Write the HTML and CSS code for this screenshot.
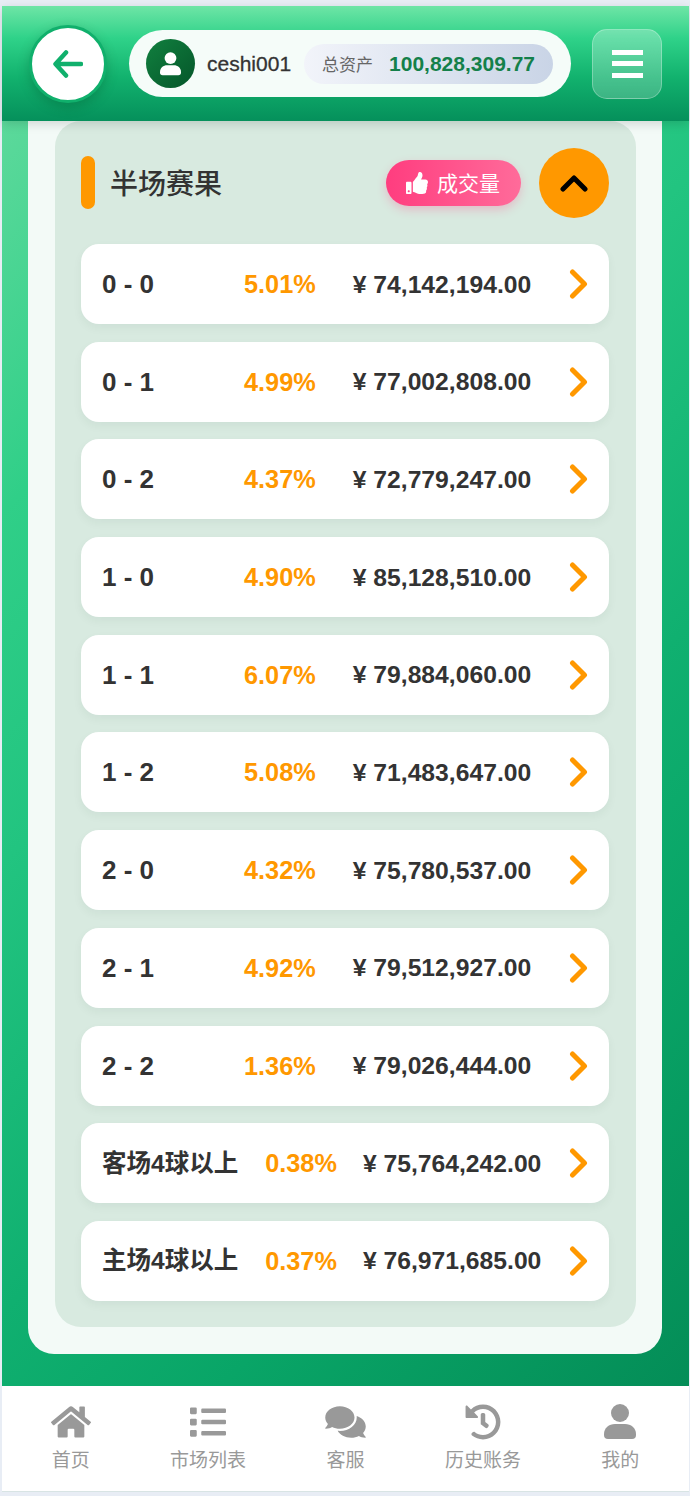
FILE: index.html
```html
<!DOCTYPE html>
<html lang="zh-CN">
<head>
	<meta charset="UTF-8">
	<meta name="viewport" content="width=device-width, initial-scale=1.0">
	<title>半场赛果</title>
	<link rel="stylesheet" href="styles.css">
</head>
<body>
	<div class="page">
		<header class="top_bar">
			<div class="back_btn">
				<svg width="30" height="28" viewBox="0 0 30 28"><path d="M13 2.500 2.500 14 13 25.500M3 14h25" fill="none" stroke="#10b06c" stroke-width="4.500" stroke-linecap="round" stroke-linejoin="round"/></svg>
			</div>
			<div class="user_pill">
				<div class="avatar">
					<svg width="21" height="24" viewBox="0 0 32 36"><circle cx="16" cy="9" r="9" fill="#fff"/><path fill="#fff" d="M0 30C0 24 5 20 11 20H21C27 20 32 24 32 30V31Q32 35 28 35H4Q0 35 0 31Z"/></svg>
				</div>
				<span class="user_name">ceshi001</span>
				<div class="balance">
					<span class="balance_label">总资产</span>
					<span class="balance_value">100,828,309.77</span>
				</div>
			</div>
			<div class="menu_btn">
				<i></i><i></i><i></i>
			</div>
		</header>

		<main class="content">
			<div class="card">
				<section class="panel">
					<div class="panel_head">
						<span class="accent"></span>
						<h2 class="panel_title">半场赛果</h2>
						<div class="volume_btn">
							<svg width="22" height="22" viewBox="0 0 512 512"><path fill="#fff" d="M104 224H24c-13.255 0-24 10.745-24 24v240c0 13.255 10.745 24 24 24h80c13.255 0 24-10.745 24-24V248c0-13.255-10.745-24-24-24zM64 472c-13.255 0-24-10.745-24-24s10.745-24 24-24 24 10.745 24 24-10.745 24-24 24zM384 81.452c0 42.416-25.97 66.208-33.277 94.548h101.723c33.397 0 59.397 27.746 59.553 58.098.084 17.938-7.546 37.249-19.439 49.197l-.11.11c9.836 23.337 8.237 56.037-9.308 79.469 8.681 25.895-.069 57.704-16.382 74.757 4.298 17.598 2.244 32.575-6.148 44.632C440.202 511.587 389.616 512 346.839 512l-2.845-.001c-48.287-.017-87.806-17.598-119.56-31.725-15.957-7.099-36.821-15.887-52.651-16.178-6.54-.12-11.783-5.457-11.783-11.998v-213.77c0-3.2 1.282-6.271 3.558-8.521 39.614-39.144 56.648-80.587 89.117-113.111 14.804-14.832 20.188-37.236 25.393-58.902C282.515 39.293 291.817 0 312 0c24 0 72 8 72 81.452z"/></svg>
							<span class="volume_text">成交量</span>
						</div>
						<div class="toggle_btn">
							<svg width="28" height="18" viewBox="0 0 28 18"><path d="M3 15 14 4l11 11" fill="none" stroke="#000" stroke-width="5" stroke-linecap="round" stroke-linejoin="round"/></svg>
						</div>
					</div>

					<div class="score_list">
						<div class="score_row">
							<span class="score">0 - 0</span><span class="rate">5.01%</span><span class="amount">¥ 74,142,194.00</span>
							<svg class="arrow" width="20" height="30" viewBox="0 0 20 30"><path d="M3.500 3 15.500 15 3.500 27" fill="none" stroke="#ff9800" stroke-width="5" stroke-linecap="round" stroke-linejoin="round"/></svg>
						</div>
						<div class="score_row">
							<span class="score">0 - 1</span><span class="rate">4.99%</span><span class="amount">¥ 77,002,808.00</span>
							<svg class="arrow" width="20" height="30" viewBox="0 0 20 30"><path d="M3.500 3 15.500 15 3.500 27" fill="none" stroke="#ff9800" stroke-width="5" stroke-linecap="round" stroke-linejoin="round"/></svg>
						</div>
						<div class="score_row">
							<span class="score">0 - 2</span><span class="rate">4.37%</span><span class="amount">¥ 72,779,247.00</span>
							<svg class="arrow" width="20" height="30" viewBox="0 0 20 30"><path d="M3.500 3 15.500 15 3.500 27" fill="none" stroke="#ff9800" stroke-width="5" stroke-linecap="round" stroke-linejoin="round"/></svg>
						</div>
						<div class="score_row">
							<span class="score">1 - 0</span><span class="rate">4.90%</span><span class="amount">¥ 85,128,510.00</span>
							<svg class="arrow" width="20" height="30" viewBox="0 0 20 30"><path d="M3.500 3 15.500 15 3.500 27" fill="none" stroke="#ff9800" stroke-width="5" stroke-linecap="round" stroke-linejoin="round"/></svg>
						</div>
						<div class="score_row">
							<span class="score">1 - 1</span><span class="rate">6.07%</span><span class="amount">¥ 79,884,060.00</span>
							<svg class="arrow" width="20" height="30" viewBox="0 0 20 30"><path d="M3.500 3 15.500 15 3.500 27" fill="none" stroke="#ff9800" stroke-width="5" stroke-linecap="round" stroke-linejoin="round"/></svg>
						</div>
						<div class="score_row">
							<span class="score">1 - 2</span><span class="rate">5.08%</span><span class="amount">¥ 71,483,647.00</span>
							<svg class="arrow" width="20" height="30" viewBox="0 0 20 30"><path d="M3.500 3 15.500 15 3.500 27" fill="none" stroke="#ff9800" stroke-width="5" stroke-linecap="round" stroke-linejoin="round"/></svg>
						</div>
						<div class="score_row">
							<span class="score">2 - 0</span><span class="rate">4.32%</span><span class="amount">¥ 75,780,537.00</span>
							<svg class="arrow" width="20" height="30" viewBox="0 0 20 30"><path d="M3.500 3 15.500 15 3.500 27" fill="none" stroke="#ff9800" stroke-width="5" stroke-linecap="round" stroke-linejoin="round"/></svg>
						</div>
						<div class="score_row">
							<span class="score">2 - 1</span><span class="rate">4.92%</span><span class="amount">¥ 79,512,927.00</span>
							<svg class="arrow" width="20" height="30" viewBox="0 0 20 30"><path d="M3.500 3 15.500 15 3.500 27" fill="none" stroke="#ff9800" stroke-width="5" stroke-linecap="round" stroke-linejoin="round"/></svg>
						</div>
						<div class="score_row">
							<span class="score">2 - 2</span><span class="rate">1.36%</span><span class="amount">¥ 79,026,444.00</span>
							<svg class="arrow" width="20" height="30" viewBox="0 0 20 30"><path d="M3.500 3 15.500 15 3.500 27" fill="none" stroke="#ff9800" stroke-width="5" stroke-linecap="round" stroke-linejoin="round"/></svg>
						</div>
						<div class="score_row long">
							<span class="score">客场4球以上</span><span class="rate">0.38%</span><span class="amount">¥ 75,764,242.00</span>
							<svg class="arrow" width="20" height="30" viewBox="0 0 20 30"><path d="M3.500 3 15.500 15 3.500 27" fill="none" stroke="#ff9800" stroke-width="5" stroke-linecap="round" stroke-linejoin="round"/></svg>
						</div>
						<div class="score_row long">
							<span class="score">主场4球以上</span><span class="rate">0.37%</span><span class="amount">¥ 76,971,685.00</span>
							<svg class="arrow" width="20" height="30" viewBox="0 0 20 30"><path d="M3.500 3 15.500 15 3.500 27" fill="none" stroke="#ff9800" stroke-width="5" stroke-linecap="round" stroke-linejoin="round"/></svg>
						</div>
					</div>
				</section>
			</div>
		</main>

		<nav class="tab_bar">
			<div class="tab">
				<svg width="40" height="36" viewBox="0 0 576 512"><path fill="#999" d="M280.37 148.26L96 300.11V464a16 16 0 0 0 16 16l112.06-.29a16 16 0 0 0 15.92-16V368a16 16 0 0 1 16-16h64a16 16 0 0 1 16 16v95.64a16 16 0 0 0 16 16.05L464 480a16 16 0 0 0 16-16V300L295.67 148.26a12.19 12.19 0 0 0-15.3 0zM571.6 251.47L488 182.56V44.05a12 12 0 0 0-12-12h-56a12 12 0 0 0-12 12v72.61L318.47 43a48 48 0 0 0-61 0L4.34 251.47a12 12 0 0 0-1.6 16.9l25.5 31A12 12 0 0 0 45.15 301l235.22-193.74a12.19 12.19 0 0 1 15.3 0L530.9 301a12 12 0 0 0 16.9-1.6l25.5-31a12 12 0 0 0-1.7-16.93z"/></svg>
				<span>首页</span>
			</div>
			<div class="tab">
				<svg width="36" height="36" viewBox="0 0 512 512"><path fill="#999" d="M80 368H16a16 16 0 0 0-16 16v64a16 16 0 0 0 16 16h64a16 16 0 0 0 16-16v-64a16 16 0 0 0-16-16zm0-320H16A16 16 0 0 0 0 64v64a16 16 0 0 0 16 16h64a16 16 0 0 0 16-16V64a16 16 0 0 0-16-16zm0 160H16a16 16 0 0 0-16 16v64a16 16 0 0 0 16 16h64a16 16 0 0 0 16-16v-64a16 16 0 0 0-16-16zm416 176H176a16 16 0 0 0-16 16v32a16 16 0 0 0 16 16h320a16 16 0 0 0 16-16v-32a16 16 0 0 0-16-16zm0-320H176a16 16 0 0 0-16 16v32a16 16 0 0 0 16 16h320a16 16 0 0 0 16-16V80a16 16 0 0 0-16-16zm0 160H176a16 16 0 0 0-16 16v32a16 16 0 0 0 16 16h320a16 16 0 0 0 16-16v-32a16 16 0 0 0-16-16z"/></svg>
				<span>市场列表</span>
			</div>
			<div class="tab">
				<svg width="41" height="36" viewBox="0 0 576 512"><path fill="#999" d="M416 192c0-88.4-93.1-160-208-160S0 103.6 0 192c0 34.3 14.1 65.9 38 92-13.4 30.2-35.5 54.2-35.8 54.5-2.2 2.3-2.8 5.7-1.5 8.7S4.8 352 8 352c36.6 0 66.9-12.3 88.7-25 32.2 15.7 70.3 25 111.3 25 114.9 0 208-71.6 208-160zm122 220c23.9-26 38-57.7 38-92 0-66.9-53.5-124.2-129.3-148.1.9 6.6 1.3 13.3 1.3 20.1 0 105.9-107.7 192-240 192-10.8 0-21.3-.8-31.7-1.9C207.8 439.6 281.8 480 368 480c41 0 79.1-9.2 111.3-25 21.8 12.7 52.1 25 88.7 25 3.2 0 6.1-1.9 7.3-4.8 1.3-2.9.7-6.3-1.5-8.7-.3-.3-22.4-24.2-35.8-54.5z"/></svg>
				<span>客服</span>
			</div>
			<div class="tab">
				<svg width="36" height="36" viewBox="0 0 512 512"><path fill="#999" d="M504 255.531c.253 136.64-111.18 248.372-247.82 248.468-59.015.042-113.223-20.53-155.822-54.911-11.077-8.94-11.905-25.541-1.839-35.607l11.267-11.267c8.609-8.609 22.353-9.551 31.891-1.984C173.062 425.135 212.781 440 256 440c101.705 0 184-82.311 184-184 0-101.705-82.311-184-184-184-48.814 0-93.149 18.969-126.068 49.932l50.754 50.754c10.08 10.08 2.941 27.314-11.313 27.314H24c-8.837 0-16-7.163-16-16V38.627c0-14.254 17.234-21.393 27.314-11.314l49.372 49.372C129.209 34.136 189.552 8 256 8c136.81 0 247.747 110.78 248 247.531zm-180.912 78.784l9.823-12.63c8.138-10.463 6.253-25.542-4.21-33.679L288 256.349V152c0-13.255-10.745-24-24-24h-16c-13.255 0-24 10.745-24 24v135.651l65.409 50.874c10.463 8.137 25.541 6.253 33.679-4.21z"/></svg>
				<span>历史账务</span>
			</div>
			<div class="tab">
				<svg width="32" height="36" viewBox="0 0 32 36"><circle cx="16" cy="9" r="9" fill="#999"/><path fill="#999" d="M0 30C0 24 5 20 11 20H21C27 20 32 24 32 30V31Q32 35 28 35H4Q0 35 0 31Z"/></svg>
				<span>我的</span>
			</div>
		</nav>
	</div>
</body>
</html>
```

FILE: styles.css
```css
*{
	box-sizing: border-box;
}
html, body{
	margin: 0;
	height: 100%;
}
body{
	background: #e8edf5;
	font-family: "Liberation Sans", "Noto Sans CJK SC", sans-serif;
	color: #333;
}
.page{
	display: flex;
	flex-direction: column;
	height: 1496px;
	padding: 6px 1px 4px 2px;
}

/* top bar */
.top_bar{
	position: relative;
	z-index: 2;
	display: flex;
	align-items: center;
	flex: none;
	height: 115px;
	padding: 0 28px 0 27px;
	background: linear-gradient(180deg, #6ee5a6 0%, #2fd289 28%, #12b26e 62%, #05905b 100%);
	box-shadow: 0 3px 10px rgba(0, 0, 0, 0.14);
}
.back_btn{
	display: flex;
	align-items: center;
	justify-content: center;
	flex: none;
	width: 78px;
	height: 78px;
	background: #fff;
	border: 3px solid #10b06c;
	border-radius: 50%;
	box-shadow: 0 4px 12px rgba(0, 80, 40, 0.3);
}
.user_pill{
	display: flex;
	align-items: center;
	flex: none;
	width: 442px;
	height: 67px;
	margin-left: 22px;
	padding-left: 17px;
	background: #f5fcf9;
	border-radius: 34px;
}
.avatar{
	display: flex;
	align-items: center;
	justify-content: center;
	width: 49px;
	height: 49px;
	background: linear-gradient(135deg, #11803f, #05562a);
	border-radius: 50%;
}
.user_name{
	margin-left: 12px;
	font-size: 21px;
	color: #333;
	-webkit-text-stroke: 0.3px #333;
}
.balance{
	display: flex;
	align-items: center;
	width: 249px;
	height: 40px;
	margin-left: 13px;
	padding-left: 18px;
	background: linear-gradient(90deg, #f2f4fa, #c9d4e6);
	border-radius: 20px;
}
.balance_label{
	font-size: 17px;
	color: #666;
}
.balance_value{
	margin-left: 16px;
	font-size: 21px;
	font-weight: bold;
	color: #14804a;
}
.menu_btn{
	display: flex;
	flex-direction: column;
	align-items: center;
	justify-content: center;
	gap: 6.5px;
	flex: none;
	width: 70px;
	height: 70px;
	margin-left: 21px;
	background: linear-gradient(180deg, rgba(255, 255, 255, 0.28), rgba(255, 255, 255, 0.2));
	border: 1.5px solid rgba(255, 255, 255, 0.28);
	border-radius: 15px;
}
.menu_btn i{
	width: 31px;
	height: 5px;
	background: #fff;
}

/* page body */
.content{
	flex: 1;
	min-height: 0;
	padding: 0 27px 32px 26px;
	background: linear-gradient(135deg, #5cd99b 0%, #30cf88 20%, #22c480 38%, #10b070 61%, #09a567 76%, #048d57 100%);
}
.card{
	padding: 0 26px 27px 27px;
	background: #f3faf7;
	border-radius: 0 0 26px 26px;
}
.panel{
	padding: 27px 27px 26px 26px;
	background: #d8eae0;
	border-radius: 26px;
}
.panel_head{
	display: flex;
	align-items: center;
	height: 70px;
	margin-bottom: 26px;
}
.accent{
	flex: none;
	width: 14px;
	height: 53px;
	margin-bottom: 1px;
	background: #ff9800;
	border-radius: 7px;
}
.panel_title{
	margin: 0 0 2px 15px;
	font-size: 28px;
	font-weight: 500;
	color: #333;
}
.volume_btn{
	display: flex;
	align-items: center;
	gap: 9px;
	width: 135px;
	height: 46px;
	margin-left: auto;
	padding-left: 20px;
	font-size: 21px;
	color: #fff;
	background: linear-gradient(90deg, #ff3d7f, #ff6b9a);
	border-radius: 23px;
	box-shadow: 0 4px 10px rgba(255, 61, 127, 0.25);
}
.volume_text{
	margin-bottom: 3px;
}
.toggle_btn{
	display: flex;
	align-items: center;
	justify-content: center;
	flex: none;
	width: 70px;
	height: 70px;
	margin-left: 18px;
	background: #ff9800;
	border-radius: 50%;
}

/* rows */
.score_list{
	display: flex;
	flex-direction: column;
	gap: 17.7px;
}
.score_row{
	position: relative;
	display: flex;
	align-items: center;
	height: 80px;
	padding: 1px 0 0 21px;
	font-size: 24.7px;
	font-weight: bold;
	background: #fff;
	border-radius: 18px;
	box-shadow: 0 4px 10px rgba(0, 60, 30, 0.05);
}
.score{
	min-width: 115px;
	margin-right: 27px;
	font-size: 26px;
	white-space: nowrap;
}
.score_row.long .score{
	margin-bottom: 5px;
	font-size: 24.5px;
}
.rate{
	margin-right: 37px;
	font-size: 25.3px;
	color: #ff9800;
}
.score_row.long .rate{
	margin-right: 26px;
}
.amount{
	white-space: nowrap;
}
.arrow{
	position: absolute;
	right: 20px;
	top: 25px;
}

/* bottom tabs */
.tab_bar{
	display: flex;
	flex: none;
	height: 106px;
	background: #fff;
	border-bottom: 1px solid #d8e4e4;
}
.tab{
	display: flex;
	flex-direction: column;
	align-items: center;
	flex: 1;
	padding-top: 18px;
	font-size: 19px;
	color: #999;
}
.tab svg{
	flex: none;
}
.tab span{
	margin-top: 5px;
}
```
